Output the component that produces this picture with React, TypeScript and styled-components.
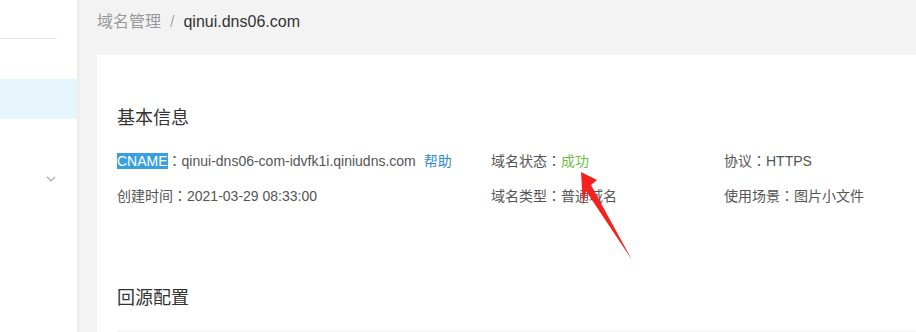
import { FC } from 'react';
import styled, { createGlobalStyle } from 'styled-components';

const GlobalStyle = createGlobalStyle`
  html, body {
    margin: 0;
    padding: 0;
    width: 916px;
    height: 332px;
    overflow: hidden;
    background: #f3f3f3;
  }
  * {
    box-sizing: border-box;
  }
  body {
    font-family: 'Liberation Sans', Arial, 'Noto Sans CJK SC', sans-serif;
    color: #333;
  }
`;

const Page = styled.div`
  position: relative;
  display: flex;
  width: 916px;
  height: 332px;
  overflow: hidden;
`;

const Sidebar = styled.aside`
  width: 77px;
  flex-shrink: 0;
  background: #fff;
  box-shadow: 1px 0 4px rgba(0, 0, 0, 0.05);
  z-index: 1;
`;

const SideTop = styled.div`
  height: 39px;
  width: 57px;
  border-bottom: 1px solid #e8e8e8;
  margin-bottom: 40px;
`;

const MenuItem = styled.div<{ $active?: boolean }>`
  height: 40px;
  display: flex;
  align-items: center;
  justify-content: flex-end;
  padding-right: 21px;
  background: ${(p) => (p.$active ? '#e6f4fb' : 'transparent')};
`;

const Main = styled.main`
  flex: 1;
  display: flex;
  flex-direction: column;
  padding-left: 20px;
  min-width: 0;
`;

const Breadcrumb = styled.nav`
  flex-shrink: 0;
  height: 44px;
  margin-bottom: 11px;
  display: flex;
  align-items: center;
  font-size: 16px;
  line-height: 20px;
`;

const Crumb = styled.span<{ $current?: boolean }>`
  color: ${(p) => (p.$current ? '#333' : '#999')};
`;

const Sep = styled.span`
  color: #aaa;
  padding: 0 9px;
`;

const Card = styled.section`
  flex: 1 0 auto;
  background: #fff;
  padding: 50px 0 0 20px;
`;

const SectionTitle = styled.h2<{ $gap?: number }>`
  margin: ${(p) => p.$gap ?? 0}px 0 0;
  font-size: 18px;
  line-height: 26px;
  font-weight: normal;
  color: #333;
`;

const InfoGrid = styled.div`
  margin-top: 19px;
  display: grid;
  grid-template-columns: 374px 233px 1fr;
  row-gap: 14px;
  font-size: 14px;
  line-height: 20px;
  color: #555;
`;

const Field = styled.div`
  white-space: nowrap;
`;

const Colon = styled.span`
  font-family: 'Noto Sans CJK JP', sans-serif;
`;

const Selected = styled.span`
  background: #3a9fe0;
  color: #fff;
`;

const Link = styled.a`
  color: #2f8bd6;
  margin-left: 8px;
  text-decoration: none;
`;

const Success = styled.span`
  color: #6bbf45;
`;

const TableHead = styled.div`
  margin-top: 19px;
  height: 40px;
  background: #f7f7f7;
`;

const Arrow = styled.svg`
  position: absolute;
  left: 0;
  top: 0;
  pointer-events: none;
  z-index: 2;
`;

const Chevron: FC = () => (
  <svg width="10" height="6" viewBox="0 0 10 6">
    <path d="M1 1l4 4 4-4" fill="none" stroke="#aaa" strokeWidth="1.2" />
  </svg>
);

const Info: FC<{ label: React.ReactNode; children: React.ReactNode }> = ({
  label,
  children,
}) => (
  <Field>
    {label}
    <Colon>：</Colon>
    {children}
  </Field>
);

const App: FC = () => (
  <>
    <GlobalStyle />
    <Page>
      <Sidebar>
        <SideTop />
        <MenuItem $active />
        <MenuItem />
        <MenuItem>
          <Chevron />
        </MenuItem>
      </Sidebar>
      <Main>
        <Breadcrumb>
          <Crumb>域名管理</Crumb>
          <Sep>/</Sep>
          <Crumb $current>qinui.dns06.com</Crumb>
        </Breadcrumb>
        <Card>
          <SectionTitle>基本信息</SectionTitle>
          <InfoGrid>
            <Info label={<Selected>CNAME</Selected>}>
              qinui-dns06-com-idvfk1i.qiniudns.com
              <Link href="#">帮助</Link>
            </Info>
            <Info label="域名状态">
              <Success>成功</Success>
            </Info>
            <Info label="协议">HTTPS</Info>
            <Info label="创建时间">2021-03-29 08:33:00</Info>
            <Info label="域名类型">普通域名</Info>
            <Info label="使用场景">图片小文件</Info>
          </InfoGrid>
          <SectionTitle $gap={79}>回源配置</SectionTitle>
          <TableHead />
        </Card>
      </Main>
      <Arrow width="916" height="332" viewBox="0 0 916 332">
        <polygon
          points="581,172 597,180 591,185 632,260 586,191 583,205"
          fill="#f5211d"
        />
      </Arrow>
    </Page>
  </>
);

export default App;
